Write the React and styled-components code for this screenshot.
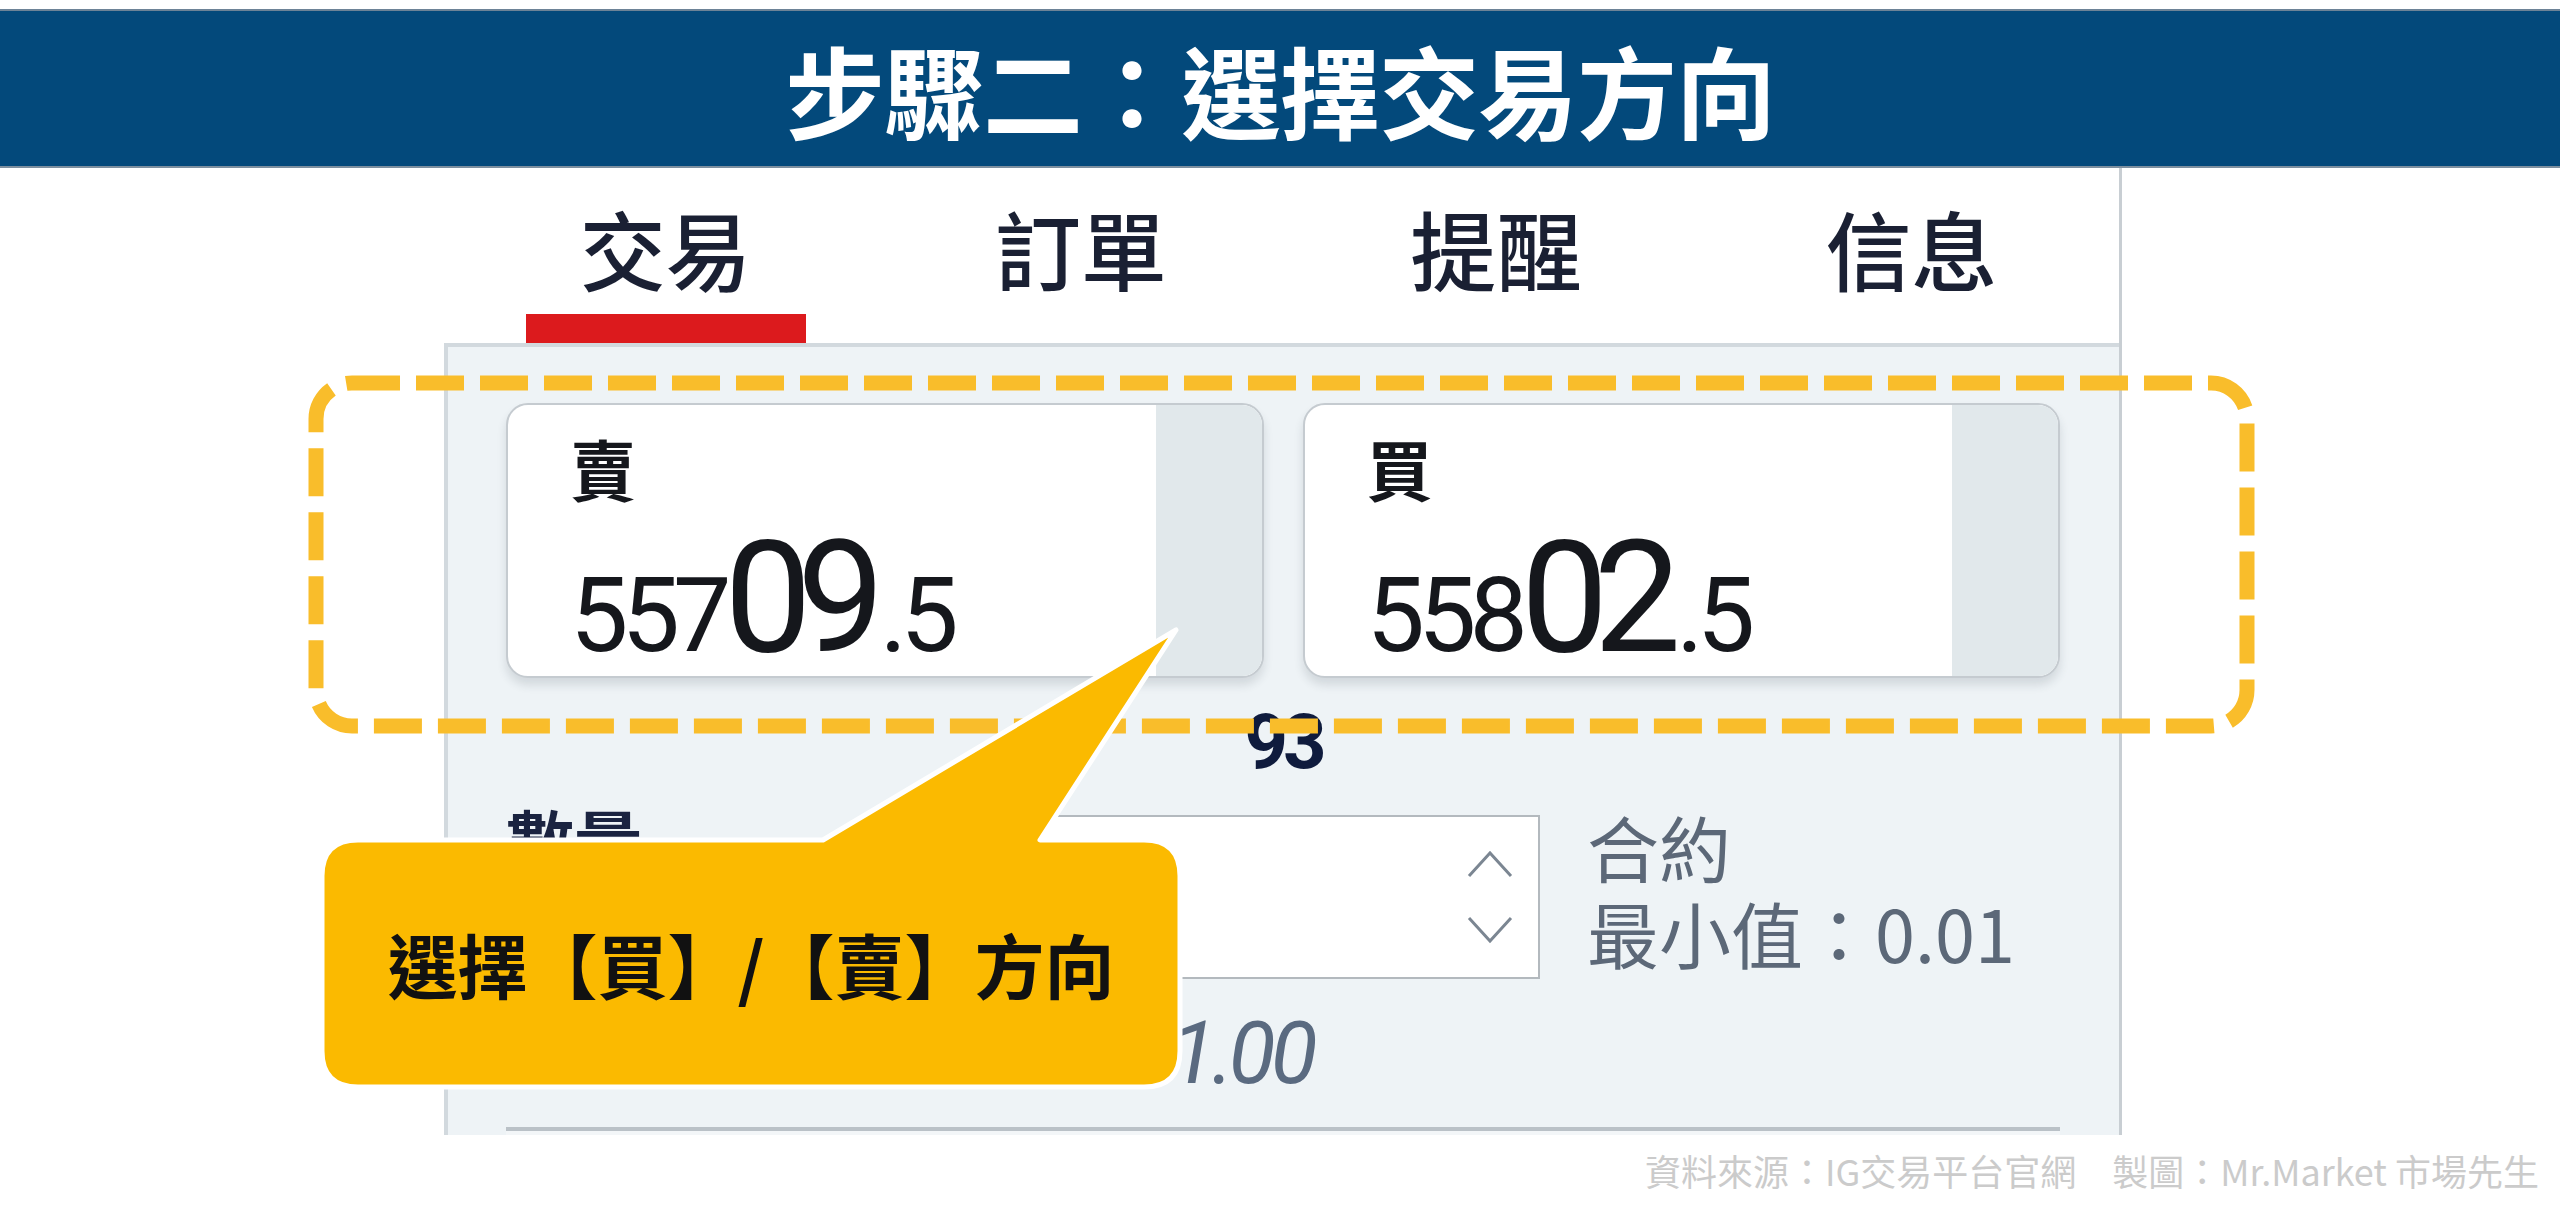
import React from 'react'
import styled, { createGlobalStyle } from 'styled-components'

const GlobalStyle = createGlobalStyle`
  html, body {
    margin: 0;
    padding: 0;
    background: #ffffff;
  }
  body {
    font-family: "Noto Sans CJK TC", "Noto Sans", sans-serif;
    overflow: hidden;
  }
`

const CJK = `"Noto Sans CJK TC", "Noto Sans", sans-serif`
const NUM = `Roboto, "Noto Sans CJK TC", sans-serif`

const Page = styled.div`
  position: relative;
  width: 2560px;
  height: 1219px;
  display: flex;
  flex-direction: column;
  background: #fff;
`

const Header = styled.header`
  margin-top: 9px;
  height: 155px;
  background: #03497b;
  border-top: 2px solid #6d8397;
  border-bottom: 2px solid #7d8f9f;
  display: flex;
  align-items: center;
  justify-content: center;
`

const Title = styled.h1`
  margin: 0;
  font-family: ${CJK};
  font-weight: 700;
  font-size: 100px;
  line-height: 1;
  color: #fff;
  letter-spacing: -1px;
`

const Stage = styled.div`
  height: 967px;
  display: flex;
`

const Gutter = styled.div`
  width: 444px;
  flex: none;
`

const Panel = styled.section`
  width: 1678px;
  flex: none;
  display: flex;
  flex-direction: column;
  border-right: 3px solid #c8ced3;
  box-sizing: border-box;
`

const TabBar = styled.nav`
  height: 175px;
  flex: none;
  display: flex;
  padding-left: 14px;
  background: #fff;
`

const Tab = styled.div`
  width: 418px;
  display: flex;
  flex-direction: column;
  align-items: center;
  padding-top: 37px;
  box-sizing: border-box;
`

const TabLabel = styled.span`
  font-family: ${CJK};
  font-weight: 500;
  font-size: 86px;
  line-height: 1;
  color: #1a2033;
`

const TabUnderline = styled.span`
  margin-top: auto;
  width: 280px;
  height: 29px;
  background: ${(p) => (p.$active ? '#dc1a1d' : 'transparent')};
`

const Body = styled.div`
  flex: 1;
  background: #eef3f6;
  border-top: 4px solid #d2d9de;
  border-left: 4px solid #d2d9de;
  padding: 56px 59px 0 58px;
  display: flex;
  flex-direction: column;
  overflow: hidden;
`

const PriceRow = styled.div`
  display: grid;
  grid-template-columns: 1fr 1fr;
  gap: 39px;
`

const Card = styled.div`
  height: 275px;
  box-sizing: border-box;
  display: flex;
  background: #fff;
  border: 2px solid #c5cbd0;
  border-radius: 22px;
  box-shadow: 0 7px 10px rgba(40, 55, 70, 0.14);
`

const CardMain = styled.div`
  flex: 1;
  padding: 29px 0 0 62px;
`

const CardSide = styled.div`
  width: 106px;
  background: #e1e8eb;
  border-radius: 0 20px 20px 0;
`

const Side = styled.div`
  font-family: ${CJK};
  font-weight: 700;
  font-size: 66px;
  line-height: 1;
  color: #15171c;
`

const Price = styled.div`
  margin-top: 28px;
  font-family: ${NUM};
  font-size: 156px;
  line-height: 140px;
  color: #15171c;
  white-space: nowrap;
`

const Small = styled.span`
  font-size: 104px;
  line-height: 1;
  letter-spacing: -7px;
`

const Big = styled.span`
  letter-spacing: -15px;
  margin-right: 10px;
`

const Spread = styled.div`
  margin-top: 26px;
  text-align: center;
  font-family: ${NUM};
  font-weight: 700;
  font-size: 76px;
  line-height: 1;
  letter-spacing: -5px;
  color: #0f1b3d;
`

const QtyRow = styled.div`
  margin-top: 35px;
  display: flex;
  align-items: flex-start;
`

const QtyLabel = styled.div`
  width: 414px;
  margin-top: -10px;
  font-family: ${CJK};
  font-weight: 700;
  font-size: 68px;
  line-height: 1;
  color: #1a2340;
`

const Input = styled.div`
  width: 620px;
  height: 164px;
  box-sizing: border-box;
  background: #fff;
  border: 2px solid #b3b9be;
  display: flex;
  justify-content: flex-end;
  padding-right: 24px;
`

const Stepper = styled.div`
  display: flex;
  flex-direction: column;
  justify-content: center;
  gap: 36px;
`

const Info = styled.div`
  margin: -12px 0 0 47px;
  font-family: ${CJK};
  font-size: 72px;
  line-height: 86px;
  color: #5c6878;
`

const MinValue = styled.div`
  margin: 32px 0 0 664px;
  font-family: ${NUM};
  font-style: italic;
  font-size: 86px;
  line-height: 1;
  letter-spacing: -5px;
  color: #5a6a80;
`

const NextBox = styled.div`
  margin-top: 30px;
  height: 60px;
  background: #f3f6f8;
  border-top: 4px solid #bac1c7;
`

const Footer = styled.footer`
  flex: 1;
  display: flex;
  justify-content: flex-end;
  padding: 14px 21px 0 0;
  font-family: ${CJK};
  font-size: 36px;
  line-height: 1.2;
  color: #cbcbcb;
  white-space: pre;
`

const Overlay = styled.svg`
  position: absolute;
  left: 0;
  top: 0;
  pointer-events: none;
`

const CalloutText = styled.div`
  position: absolute;
  left: 322px;
  top: 840px;
  width: 858px;
  height: 247px;
  display: flex;
  align-items: center;
  justify-content: center;
  font-family: ${CJK};
  font-weight: 700;
  font-size: 70px;
  color: #111;
  white-space: nowrap;
`

const Chevron = ({ up }) => (
  <svg width='48' height='30' viewBox='0 0 48 30'>
    <path
      d={up ? 'M3 27 L24 4 L45 27' : 'M3 3 L24 26 L45 3'}
      fill='none'
      stroke='#7b8692'
      strokeWidth='3'
    />
  </svg>
)

const tabs = ['交易', '訂單', '提醒', '信息']

const quotes = [
  { side: '賣', head: '557', big: '09', tail: '.5' },
  { side: '買', head: '558', big: '02', tail: '.5' }
]

const calloutPath =
  'M358 840 L823 840 L1176 630 L1040 840 L1144 840 Q1180 840 1180 876 L1180 1051 Q1180 1087 1144 1087 L358 1087 Q322 1087 322 1051 L322 876 Q322 840 358 840 Z'

export default function App() {
  return (
    <Page>
      <GlobalStyle />
      <Header>
        <Title>步驟二：選擇交易方向</Title>
      </Header>
      <Stage>
        <Gutter />
        <Panel>
          <TabBar>
            {tabs.map((t, i) => (
              <Tab key={t}>
                <TabLabel>{t}</TabLabel>
                <TabUnderline $active={i === 0} />
              </Tab>
            ))}
          </TabBar>
          <Body>
            <PriceRow>
              {quotes.map((q) => (
                <Card key={q.side}>
                  <CardMain>
                    <Side>{q.side}</Side>
                    <Price>
                      <Small>{q.head}</Small>
                      <Big>{q.big}</Big>
                      <Small>{q.tail}</Small>
                    </Price>
                  </CardMain>
                  <CardSide />
                </Card>
              ))}
            </PriceRow>
            <Spread>93</Spread>
            <QtyRow>
              <QtyLabel>數量</QtyLabel>
              <Input>
                <Stepper>
                  <Chevron up />
                  <Chevron />
                </Stepper>
              </Input>
              <Info>
                合約
                <br />
                最小值：0.01
              </Info>
            </QtyRow>
            <MinValue>1.00</MinValue>
            <NextBox />
          </Body>
        </Panel>
      </Stage>
      <Footer>資料來源：IG交易平台官網　製圖：Mr.Market 市場先生</Footer>

      <Overlay width='2560' height='1219' viewBox='0 0 2560 1219'>
        <rect
          x='316'
          y='383'
          width='1931'
          height='343'
          rx='36'
          fill='none'
          stroke='#f9bd2b'
          strokeWidth='15'
          strokeDasharray='48 16'
        />
        <path d={calloutPath} fill='#fbba00' stroke='#ffffff' strokeWidth='5' strokeLinejoin='round' />
      </Overlay>
      <CalloutText>選擇【買】/【賣】方向</CalloutText>
    </Page>
  )
}
